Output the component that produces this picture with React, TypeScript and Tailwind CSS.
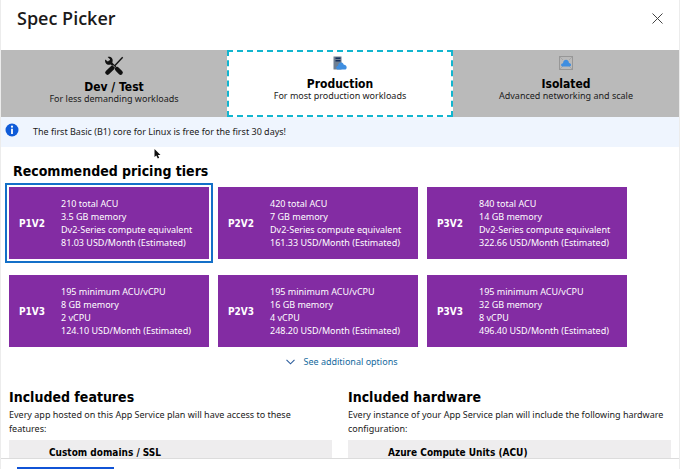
import type { ReactNode } from "react";

type Tier = { name: string; specs: string[] };

const tiers: Tier[] = [
  { name: "P1V2", specs: ["210 total ACU", "3.5 GB memory", "Dv2-Series compute equivalent", "81.03 USD/Month (Estimated)"] },
  { name: "P2V2", specs: ["420 total ACU", "7 GB memory", "Dv2-Series compute equivalent", "161.33 USD/Month (Estimated)"] },
  { name: "P3V2", specs: ["840 total ACU", "14 GB memory", "Dv2-Series compute equivalent", "322.66 USD/Month (Estimated)"] },
  { name: "P1V3", specs: ["195 minimum ACU/vCPU", "8 GB memory", "2 vCPU", "124.10 USD/Month (Estimated)"] },
  { name: "P2V3", specs: ["195 minimum ACU/vCPU", "16 GB memory", "4 vCPU", "248.20 USD/Month (Estimated)"] },
  { name: "P3V3", specs: ["195 minimum ACU/vCPU", "32 GB memory", "8 vCPU", "496.40 USD/Month (Estimated)"] },
];

function ToolsIcon() {
  return (
    <svg width="20" height="20" viewBox="0 0 20 20" aria-hidden="true">
      <path d="M5.5 5.5 15 15" stroke="#111" strokeWidth="2.4" strokeLinecap="round" />
      <path d="M1.2 3.4 3.8 5.6 5.8 5.1 6.1 3.2 3.6 0.9C6.6 0 9.2 2.2 8.6 5.2L8 8 5.6 8.8C2.8 9.2.4 6.6 1.2 3.4Z" fill="#111" />
      <path d="M18.2 0.8 19.2 1.8 11.2 10.2 10.2 9.2Z" fill="#111" />
      <path d="M8.6 11.6 3.4 16.6" stroke="#111" strokeWidth="4.4" strokeLinecap="round" />
      <path d="M13.2 13.2 16.6 16.6" stroke="#111" strokeWidth="4.4" strokeLinecap="round" />
      <path d="M8.8 9.2 11.4 11.8" stroke="#bababa" strokeWidth="0.8" />
    </svg>
  );
}

function ServerIcon() {
  return (
    <svg width="14" height="14" viewBox="0 0 14 14" aria-hidden="true">
      <rect x="0.5" y="0.5" width="8" height="13" fill="#6f7f92" />
      <rect x="2.5" y="1.5" width="5" height="1.5" fill="#17305c" />
      <rect x="2.5" y="4" width="5" height="1.5" fill="#17305c" />
      <path d="M5.2 13.5C2.6 13.5 2.6 10 5 9.8 5.2 6.2 9.6 5.2 10.6 8.4 14.4 8.8 14.6 13.5 11.6 13.5Z" fill="#3f8ee0" />
    </svg>
  );
}

function IsolatedIcon() {
  return (
    <svg width="14" height="14" viewBox="0 0 14 14" aria-hidden="true">
      <rect x="0.5" y="0.5" width="13" height="13" fill="none" stroke="#979797" />
      <path d="M1 1 4 4M13 1 10 4M1 13 4 10M13 13 10 10" stroke="#a2a2a2" strokeWidth="0.8" />
      <path d="M4 10.5C1.4 10.5 1.6 7.2 4 7.2 4.6 2.8 9.4 2.8 10 7 12.8 7.2 12.6 10.5 10.4 10.5Z" fill="#3f8ee0" />
    </svg>
  );
}

function Tab({ icon, title, text, selected = false }: { icon: ReactNode; title: string; text: string; selected?: boolean }) {
  return (
    <button
      type="button"
      role="tab"
      aria-selected={selected}
      className={`flex flex-1 flex-col items-center justify-start border-2 pt-1 pb-[11px] ${
        selected ? "border-dashed border-[#12b5cf] bg-white" : "border-[#bababa] bg-[#bababa]"
      }`}
    >
      <span className="min-h-[17px]">{icon}</span>
      <span className="mt-1 font-['DejaVu_Sans_Condensed','DejaVu_Sans',sans-serif] text-[12px] leading-[14px] font-bold text-black">
        {title}
      </span>
      <span className="text-[9px] leading-[10px]">{text}</span>
    </button>
  );
}

function TierCard({ tier, selected }: { tier: Tier; selected: boolean }) {
  return (
    <button
      type="button"
      aria-pressed={selected}
      className={`flex w-[200px] items-center bg-[#832ca3] py-[10px] text-left text-white ${
        selected ? "outline-2 outline-offset-2 outline-[#1470c8]" : ""
      }`}
    >
      <span className="w-[52px] pl-[10px] font-['DejaVu_Sans_Condensed','DejaVu_Sans',sans-serif] text-[10px] font-bold">{tier.name}</span>
      <span className="flex flex-col text-[9px] leading-[13px] whitespace-nowrap">
        {tier.specs.map((spec) => (
          <span key={spec}>{spec}</span>
        ))}
      </span>
    </button>
  );
}

function Included({ title, text, item, mark }: { title: string; text: string; item: string; mark: ReactNode }) {
  return (
    <section className="flex-1">
      <h2 className="font-['DejaVu_Sans_Condensed','DejaVu_Sans',sans-serif] text-[14px] leading-5 font-bold text-black">{title}</h2>
      <p className="mt-px pr-[6px] text-[9px] leading-[14px]">{text}</p>
      <div className="mt-1 flex h-12 gap-[20px] bg-[#eeedee] pt-[7px] pl-3">
        <span className="w-2 pt-[11px]">{mark}</span>
        <h3 className="font-['DejaVu_Sans_Condensed','DejaVu_Sans',sans-serif] text-[10px] leading-[12px] font-bold text-black">{item}</h3>
      </div>
    </section>
  );
}

export default function App() {
  return (
    <div className="relative flex h-screen flex-col overflow-hidden border-x border-[#ececec] bg-white font-['Noto_Sans',sans-serif] text-[#1a1a1a]">
      <header className="flex h-[50px] shrink-0 items-start justify-between px-4 pt-1">
        <h1 className="font-['Open_Sans',sans-serif] text-[18px] leading-7 font-semibold text-[#1c1a1a]">Spec Picker</h1>
        <button type="button" aria-label="Close" className="mt-[9px]">
          <svg width="11" height="11" viewBox="0 0 11 11" aria-hidden="true">
            <path d="M0.5 0.5 10.5 10.5M10.5 0.5 0.5 10.5" stroke="#444" strokeWidth="1" />
          </svg>
        </button>
      </header>

      <main className="min-h-0 flex-1 overflow-hidden">
        <div role="tablist" className="flex">
          <Tab icon={<ToolsIcon />} title="Dev / Test" text="For less demanding workloads" />
          <Tab icon={<ServerIcon />} title="Production" text="For most production workloads" selected />
          <Tab icon={<IsolatedIcon />} title="Isolated" text="Advanced networking and scale" />
        </div>

        <div className="flex h-[30px] items-center gap-[14px] bg-[#eff5fe] pl-1">
          <svg width="14" height="14" viewBox="0 0 14 14" aria-hidden="true" className="mb-1">
            <circle cx="7" cy="7" r="6.5" fill="#0f5bd8" />
            <circle cx="7" cy="3.7" r="1.1" fill="#fff" />
            <path d="M7 5.8V11" stroke="#fff" strokeWidth="1.8" />
          </svg>
          <p className="text-[9px]">The first Basic (B1) core for Linux is free for the first 30 days!</p>
        </div>

        <section className="px-2 pt-[14px]">
          <h2 className="pl-1 font-['DejaVu_Sans_Condensed','DejaVu_Sans',sans-serif] text-[14px] leading-5 font-bold text-black">
            Recommended pricing tiers
          </h2>
          <div className="mt-[6px] flex flex-wrap gap-x-[9px] gap-y-4">
            {tiers.map((tier) => (
              <TierCard key={tier.name} tier={tier} selected={tier.name === "P1V2"} />
            ))}
          </div>
        </section>

        <div className="mt-2 flex justify-center pl-1">
          <button type="button" className="flex items-center gap-2 text-[9px] leading-[14px] text-[#146a9e]">
            <svg width="9" height="6" viewBox="0 0 9 6" aria-hidden="true">
              <path d="M0.5 0.8 4.5 4.8 8.5 0.8" fill="none" stroke="#2c5d9c" strokeWidth="1.1" />
            </svg>
            See additional options
          </button>
        </div>

        <div className="mt-[18px] flex gap-4 px-2">
          <Included
            title="Included features"
            text="Every app hosted on this App Service plan will have access to these features:"
            item="Custom domains / SSL"
            mark={<span className="ml-[5px] block h-px w-[2px] bg-[#b5b83a]" />}
          />
          <Included
            title="Included hardware"
            text="Every instance of your App Service plan will include the following hardware configuration:"
            item="Azure Compute Units (ACU)"
            mark={<span className="block h-px w-2 bg-[#777]" />}
          />
        </div>
      </main>

      <footer className="h-[11px] shrink-0 overflow-hidden border-t border-[#dcdcdc] bg-white pt-2 pl-4">
        <button type="button" aria-label="Apply" className="block h-6 w-[97px] bg-[#1053d6]" />
      </footer>

      <svg width="7" height="10" viewBox="0 0 7 10" aria-hidden="true" className="absolute top-[149px] left-[153px]">
        <path d="M0.5 0V8L2.3 6.5 3.8 9.5 5.2 8.8 3.8 6H6.5Z" fill="#111" />
      </svg>
    </div>
  );
}
